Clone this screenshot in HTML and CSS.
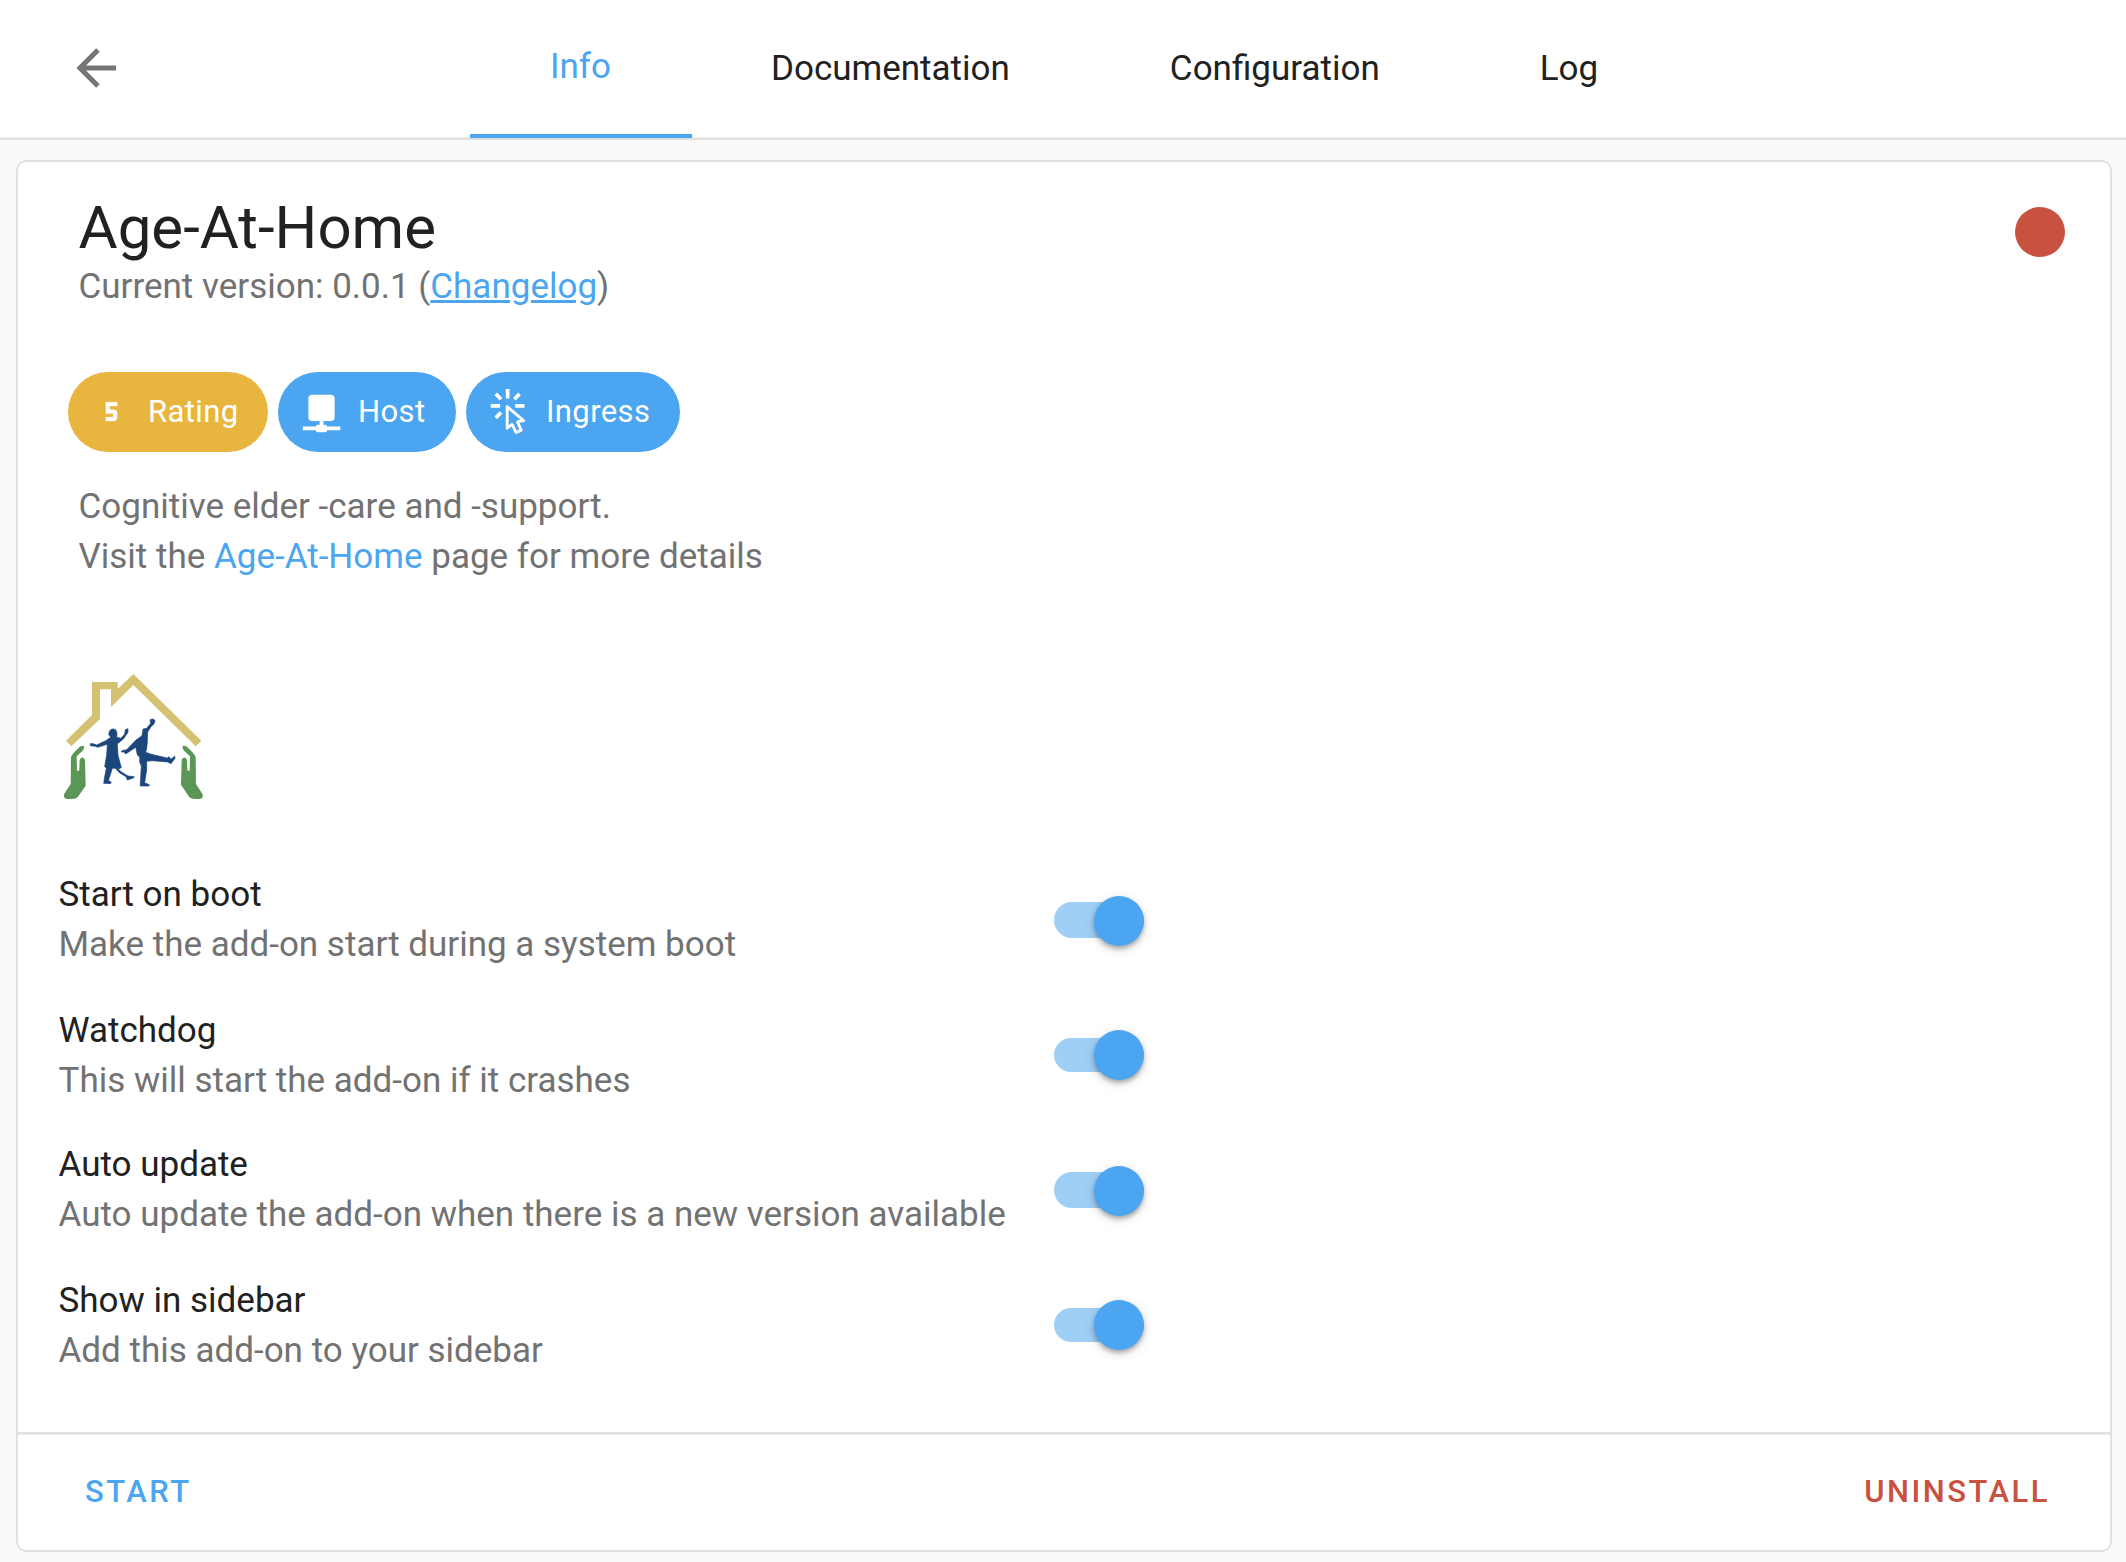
FILE: index.html
```html
<!DOCTYPE html>
<html lang="en">
<head>
<meta charset="utf-8">
<title>Age-At-Home</title>
<link rel="stylesheet" href="styles.css">
</head>
<body>
<header class="toolbar">
  <a class="back" href="#" aria-label="Back"><svg viewBox="0 0 24 24"><path d="M20,11V13H8L13.5,18.5L12.08,19.92L4.16,12L12.08,4.08L13.5,5.5L8,11H20Z"/></svg></a>
  <nav class="tabs">
    <a class="tab active" href="#">Info</a>
    <a class="tab" href="#">Documentation</a>
    <a class="tab" href="#">Configuration</a>
    <a class="tab" href="#">Log</a>
  </nav>
</header>
<main class="card">
  <div class="content">
    <div class="heading">
      <div>
        <h1 class="title">Age-At-Home</h1>
        <p class="version">Current version: 0.0.1 (<a class="changelog" href="#">Changelog</a>)</p>
      </div>
      <span class="status"></span>
    </div>
    <div class="chips">
      <span class="chip rating"><svg class="icon" viewBox="0 0 24 24"><path d="M9,7V13H13V15H9V17H13A2,2 0 0,0 15,15V13A2,2 0 0,0 13,11H11V9H15V7H9Z"/></svg>Rating</span>
      <span class="chip host"><svg class="icon" viewBox="0 0 24 24"><path d="M15,20A1,1 0 0,0 14,19H13V17H17A2,2 0 0,0 19,15V5A2,2 0 0,0 17,3H7A2,2 0 0,0 5,5V15A2,2 0 0,0 7,17H11V19H10A1,1 0 0,0 9,20H2V22H9A1,1 0 0,0 10,23H14A1,1 0 0,0 15,22H22V20H15Z"/></svg>Host</span>
      <span class="chip ingress"><svg class="icon" viewBox="0 0 24 24"><path d="M11.5,11L17.88,16.37L17,16.55L16.36,16.67C15.73,16.8 15.37,17.5 15.65,18.07L15.92,18.65L17.28,21.59L15.86,22.25L14.5,19.32L14.24,18.74C13.97,18.15 13.22,17.97 12.72,18.38L12.21,18.78L11.5,19.35V11M10.76,8.69A0.76,0.76 0 0,0 10,9.45V20.9C10,21.32 10.34,21.66 10.76,21.66C10.95,21.66 11.11,21.6 11.24,21.5L13.15,19.95L14.81,23.57C14.94,23.84 15.21,24 15.5,24C15.61,24 15.72,24 15.83,23.92L18.59,22.64C18.97,22.46 19.15,22 18.95,21.63L17.28,18L19.69,17.55C19.85,17.5 20,17.43 20.12,17.29C20.39,16.97 20.35,16.5 20,16.21L11.26,8.86L11.25,8.87C11.12,8.76 10.95,8.69 10.76,8.69M15,10V8H20V10H15M13.83,4.76L16.66,1.93L18.07,3.34L15.24,6.17L13.83,4.76M10,0H12V5H10V0M3.93,14.66L6.76,11.83L8.17,13.24L5.34,16.07L3.93,14.66M3.93,3.34L5.34,1.93L8.17,4.76L6.76,6.17L3.93,3.34M7,10H2V8H7V10"/></svg>Ingress</span>
    </div>
    <p class="description">Cognitive elder -care and -support.<br>Visit the <a class="link" href="#">Age-At-Home</a> page for more details</p>
    <svg class="logo" viewBox="0 0 510 450">
      <path class="roof" d="M48 242L126 165V66H203V87L250 42L454 242L437 259L250 75L183 141V88H150V177L64 259Z"/>
      <g class="hands">
        <path d="M101 257Q105 263 98 272L80 289L81 333L88 331L89 300Q96 286 105 299L107 377L84 410Q77 419 60 417Q36 418 43 401L62 372L63 291Q65 283 91 259Z"/>
        <path d="M399 257Q395 263 402 272L420 289L419 333L412 331L411 300Q404 286 395 299L393 374L416 409Q423 419 440 417Q464 418 457 401L438 372L437 291Q435 283 409 259Z"/>
      </g>
      <g class="people">
        <path d="M121 251Q129 250 140 255L167 242L182 232L176 223Q178 205 192 207Q204 210 200 232L213 235L224 222L226 209L234 206L234 217L221 236L202 252L204 286L214 323L205 327L213 335L234 348L253 350L250 354L232 360L228 350L208 338L196 325H187L181 344L175 361L184 367L181 371L161 370L163 356L169 324L164 320L170 285L172 253L143 262L136 259L121 257Z"/>
        <path d="M300 179L309 177L315 181L312 192L304 199L293 216L292 246L290 266L287 277L304 283L352 294L357 290L363 298L374 288L375 295L363 311L353 306L306 302L290 304L290 330L284 368L298 374L297 378L271 378L271 368L274 318L269 306L269 292L262 284L257 262L233 278L227 282L222 276L214 276L216 272L230 269L258 240L276 227L279 207L290 205L302 190Z"/>
      </g>
    </svg>
    <section class="options">
      <div class="option"><div><div class="name">Start on boot</div><div class="hint">Make the add-on start during a system boot</div></div><span class="switch"></span></div>
      <div class="option"><div><div class="name">Watchdog</div><div class="hint">This will start the add-on if it crashes</div></div><span class="switch"></span></div>
      <div class="option"><div><div class="name">Auto update</div><div class="hint">Auto update the add-on when there is a new version available</div></div><span class="switch"></span></div>
      <div class="option"><div><div class="name">Show in sidebar</div><div class="hint">Add this add-on to your sidebar</div></div><span class="switch"></span></div>
    </section>
  </div>
  <footer class="actions">
    <button class="action start">START</button>
    <button class="action uninstall">UNINSTALL</button>
  </footer>
</main>
</body>
</html>
```

FILE: styles.css
```css
* { box-sizing: border-box; }
body {
  margin: 0;
  height: 1562px;
  overflow: hidden;
  background: #fafafa;
  color: #212121;
  font: 35px/50px Roboto, sans-serif;
}
a { color: inherit; text-decoration: none; }
h1, p { margin: 0; font-weight: 400; }
svg { display: block; fill: currentColor; }

.toolbar {
  display: flex;
  height: 140px;
  background: #fff;
  box-shadow: inset 0 -2px #e0e0e0, inset 0 -3px #efefef;
}
.back { width: 470px; padding: 38px 0 0 66px; color: #757575; }
.back svg { width: 60px; height: 60px; }
.tabs { display: flex; height: 138px; }
.tab { padding: 0 80px; line-height: 138px; }
.tab.active {
  padding-right: 81px;
  margin-right: -1px;
  color: #4ba5f0;
  border-bottom: 4px solid #4ba5f0;
  line-height: 133px;
}

.card {
  display: flex;
  flex-direction: column;
  width: 2096px;
  height: 1392px;
  margin: 20px 0 0 16px;
  background: #fff;
  border: 2px solid #e0e0e0;
  border-radius: 10px;
}
.content { height: 1270px; }
.heading {
  display: flex;
  justify-content: space-between;
  padding: 36px 45px 0 60.5px;
}
.title { font-size: 60px; line-height: 60px; }
.version { margin-top: 4px; color: #727272; }
.changelog { color: #4ba5f0; text-decoration: underline; }
.status { width: 50px; height: 50px; margin-top: 9px; border-radius: 50%; background: #c85140; }

.chips { display: flex; gap: 10px; padding: 60px 0 0 50px; }
.chip {
  display: flex;
  align-items: center;
  height: 80px;
  padding-left: 20.5px;
  border-radius: 40px;
  background: #4ba5f0;
  color: #fff;
  font-size: 31px;
  letter-spacing: .4px;
}
.chip.rating { width: 200px; background: #e8b63f; }
.chip.host { width: 178px; }
.chip.ingress { width: 214px; }
.icon { width: 45px; height: 45px; margin: 0 14.5px 2px 0; }
.rating .icon { stroke: currentColor; stroke-width: .25; }

.description { padding: 30px 0 0 60.5px; color: #727272; }
.link { color: #4ba5f0; }
.logo { width: 170px; height: 150px; margin: 78px 0 0 32px; }
.roof { fill: #d4c272; }
.hands { fill: #5a9655; }
.people { fill: #1c477d; stroke: #1c477d; stroke-width: 2; }

.options { padding: 60px 0 0 40.5px; }
.option {
  display: flex;
  justify-content: space-between;
  width: 1085.5px;
  height: 136px;
}
.option:nth-child(even) { height: 134px; }
.hint { color: #727272; }
.switch {
  display: flex;
  align-items: center;
  justify-content: flex-end;
  width: 90px;
  height: 36px;
  margin-top: 32px;
  border-radius: 18px;
  background: #9fcff7;
}
.switch::before {
  content: "";
  width: 50px;
  height: 50px;
  margin-top: 2px;
  border-radius: 50%;
  background: #4ba5f0;
  box-shadow: 0 3px 4px rgba(0,0,0,.25), 0 3px 12px rgba(0,0,0,.14);
}
.option:nth-child(even) .switch { height: 34px; }
.option:nth-child(even) .switch::before { margin-top: 0; }

.actions {
  display: flex;
  justify-content: space-between;
  align-items: center;
  flex: 1;
  padding: 0 60px 0 67px;
  border-top: 2px solid #e0e0e0;
  box-shadow: inset 0 1px #efefef;
  border-radius: 0 0 8px 8px;
}
.action {
  padding: 0;
  border: 0;
  background: none;
  font: 500 31px/40px Roboto, sans-serif;
  letter-spacing: 2.5px;
}
.start { color: #4ba5f0; }
.uninstall { color: #c85140; }
```
